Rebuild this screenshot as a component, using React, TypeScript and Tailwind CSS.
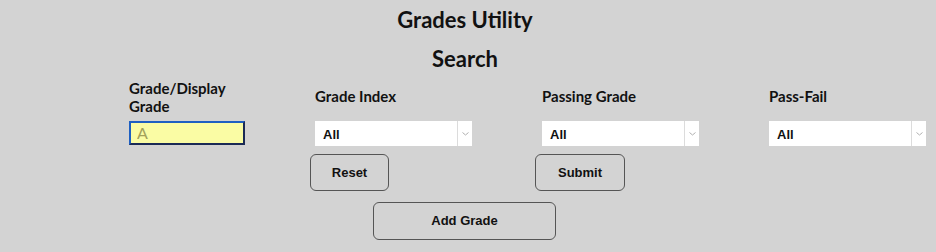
const labelFont = { fontFamily: "Lato, 'Noto Sans', sans-serif" };

const SelectBox = () => (
  <div className="flex h-[25px] w-[157px] bg-white">
    <div className="flex flex-1 items-center pl-[8px] pt-[3px] font-['Liberation_Sans',Arial,sans-serif] text-[13px] font-bold text-[#111]">
      All
    </div>
    <div className="flex w-[15px] items-center justify-center border-l border-[#dcdcdc]">
      <svg width="7" height="4" viewBox="0 0 7 4">
        <path d="M0.5 0.5 L3.5 3 L6.5 0.5" fill="none" stroke="#b0b0b0" strokeWidth="1" />
      </svg>
    </div>
  </div>
);

const Btn = ({ label, className }: { label: string; className: string }) => (
  <button
    className={`rounded-[6px] border border-[#555] bg-transparent font-['Liberation_Sans',Arial,sans-serif] text-[13px] font-bold text-[#111] ${className}`}
  >
    {label}
  </button>
);

export default function App() {
  return (
    <div className="min-h-[252px] w-full bg-[#d3d3d3] text-[#111]" style={labelFont}>
      <div className="flex flex-col items-center pr-[6px] pt-[6px]">
        <h1 className="text-[22px] font-bold leading-[28px]">Grades Utility</h1>
        <h2 className="mt-[11px] text-[22px] font-bold leading-[28px]">Search</h2>
      </div>

      <div className="grid grid-cols-[186px_227px_227px_157px] grid-rows-[37px_auto_auto] pl-[129px] pt-[5px]">
        <div className="flex items-center text-[15px] font-bold leading-[18px]">
          Grade/Display
          <br />
          Grade
        </div>
        <div className="flex items-center text-[15px] font-bold">Grade Index</div>
        <div className="flex items-center text-[15px] font-bold">Passing Grade</div>
        <div className="flex items-center text-[15px] font-bold">Pass-Fail</div>

        <div className="mt-[6px]">
          <input
            placeholder="A"
            className="h-[24px] w-[116px] border-2 border-[#1e5fc2] border-b-[#1a2a55] border-r-[#1a2a55] bg-[#fafca4] px-[6px] text-[16px] outline-none placeholder:text-[#a3a15a]"
          />
        </div>
        <div className="mt-[6px]">
          <SelectBox />
        </div>
        <div className="mt-[6px]">
          <SelectBox />
        </div>
        <div className="mt-[6px]">
          <SelectBox />
        </div>

        <div className="mt-[8px]" />
        <div className="mt-[8px] -ml-[5px]">
          <Btn label="Reset" className="h-[37px] w-[79px]" />
        </div>
        <div className="mt-[8px] -ml-[7px]">
          <Btn label="Submit" className="h-[37px] w-[90px]" />
        </div>
        <div />
      </div>

      <div className="flex justify-center pr-[7px] pt-[11px]">
        <Btn label="Add Grade" className="h-[38px] w-[183px]" />
      </div>
    </div>
  );
}
